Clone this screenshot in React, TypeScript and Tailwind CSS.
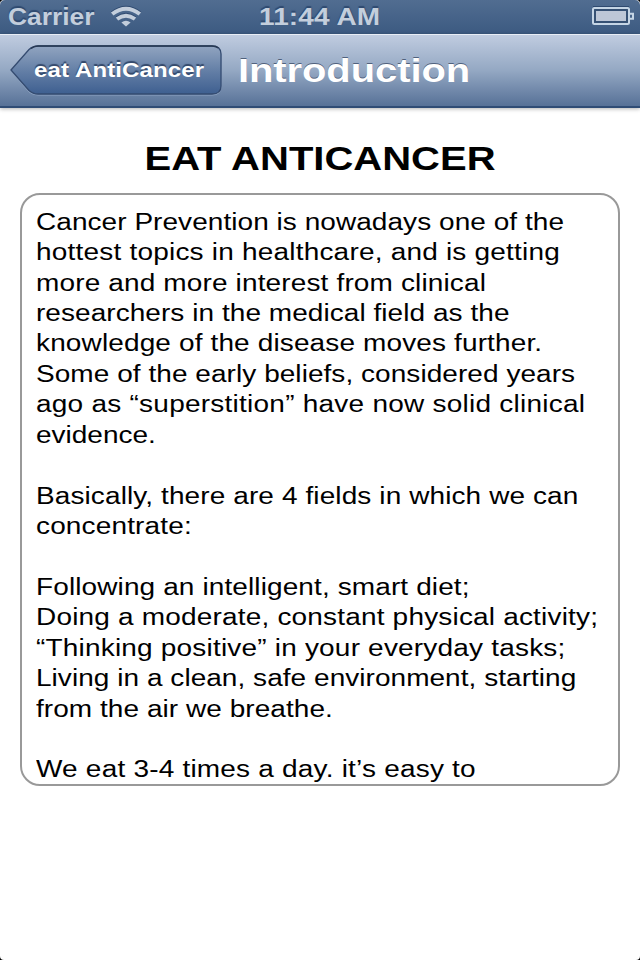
type Line = [text: string, tracking: number]

const paragraphs: Line[][] = [
  [
    ['Cancer Prevention is nowadays one of the', 0.05],
    ['hottest topics in healthcare, and is getting', 0.2],
    ['more and more interest from clinical', 0.14],
    ['researchers in the medical field as the', 0.05],
    ['knowledge of the disease moves further.', 0.13],
    ['Some of the early beliefs, considered years', 0.05],
    ['ago as “superstition” have now solid clinical', 0.24],
    ['evidence.', 0],
  ],
  [
    ['Basically, there are 4 fields in which we can', 0.1],
    ['concentrate:', 0.15],
  ],
  [
    ['Following an intelligent, smart diet;', 0.11],
    ['Doing a moderate, constant physical activity;', 0.18],
    ['“Thinking positive” in your everyday tasks;', 0.19],
    ['Living in a clean, safe environment, starting', 0.04],
    ['from the air we breathe.', 0.05],
  ],
  [['We eat 3-4 times a day. it’s easy to', 0.2]],
]

function WifiIcon() {
  return (
    <svg className="mt-[5px] ml-[16px] h-[22px] w-[32px]" viewBox="0 0 32 22" fill="none">
      <g stroke="#2f4a70" strokeWidth="4" transform="translate(0 -1)">
        <path d="M2.2 9Q16 -1.6 29.8 9" />
        <path d="M7 14Q16 7.4 25 14" />
      </g>
      <g stroke="#c3cedc" strokeWidth="4">
        <path d="M2.2 9Q16 -1.6 29.8 9" />
        <path d="M7 14Q16 7.4 25 14" />
      </g>
      <path d="M11.4 17.4Q16 14 20.6 17.4L16 21.4Z" fill="#c3cedc" />
    </svg>
  )
}

function BatteryIcon() {
  return (
    <svg className="mt-[6px] h-[20px] w-[44px]" viewBox="0 0 44 20" fill="none">
      <rect x="1" y="2" width="36" height="16" rx="1.5" fill="#365174" stroke="#c5d5e5" strokeWidth="2" />
      <rect x="4" y="5" width="30" height="10" fill="#bdc7d7" />
      <path d="M38 7.8h3v5h-3" stroke="#c5d5e5" strokeWidth="2" />
      <path d="M1 .5h36" stroke="#2f4a70" />
    </svg>
  )
}

function StatusBar() {
  return (
    <div className="grid h-[34px] grid-cols-[259px_1fr_48px] rounded-t-[5px] bg-linear-to-b from-[#516d91] to-[#3c5a81] text-[28px] leading-[32px] font-bold text-[#c3cedc] [text-shadow:0_-2px_1px_#2f4a70]">
      <div className="flex items-start pl-[8px]">
        <span className="mt-[3px] block w-[86px] origin-top-left scale-y-[0.88] text-[26.4px]">
          Carrier
        </span>
        <WifiIcon />
      </div>
      <span className="mt-[4px] block origin-top-left scale-y-[0.845] tracking-[0.1px] whitespace-nowrap">
        11:44 AM
      </span>
      <BatteryIcon />
    </div>
  )
}

function BackButton() {
  return (
    <button className="relative mt-[10px] ml-[10px] h-[51px] w-[213px] shrink-0 text-left">
      <svg className="absolute inset-0" width="213" height="51" viewBox="0 0 213 51" fill="none">
        <defs>
          <linearGradient id="back" x1="0" y1="0" x2="0" y2="1">
            <stop offset="0" stopColor="#91a4c0" />
            <stop offset="0.5" stopColor="#6580a7" />
            <stop offset="1" stopColor="#3e5f90" />
          </linearGradient>
        </defs>
        <path
          d="M1 26L19 5Q23 2 28 2H202Q211 2 211 10V42Q211 50 202 50H28Q23 50 19 47Z"
          stroke="#8ca2c1"
        />
        <path
          d="M1 25L19 4.5Q23 1 28 1H202Q211 1 211 9V41Q211 49 202 49H28Q23 49 19 45.5Z"
          fill="url(#back)"
          stroke="#344b70"
          strokeWidth="1.3"
        />
        <path d="M21 3.5Q24 1 28 1H202Q206 1 208.5 3" stroke="#273852" strokeWidth="1.5" />
      </svg>
      <span className="relative mt-[2px] ml-[24px] block origin-top-left scale-y-[0.845] text-[24px] leading-[28px] font-bold tracking-[0.12px] whitespace-nowrap text-white [text-shadow:0_-2px_1px_#33486a]">
        eat AntiCancer
      </span>
    </button>
  )
}

export default function App() {
  return (
    <div className="h-[960px] w-[640px] overflow-hidden bg-black font-['Liberation_Sans',Arial,sans-serif]">
      <div className="flex h-full flex-col rounded-[4px] bg-white">
        <StatusBar />
        <header className="flex h-[74px] shrink-0 items-start border-t border-b-2 border-t-[#e8edf5] border-b-[#2f4c75] bg-linear-to-b from-[#c0cce0] via-[#94a8c3] to-[#577197] shadow-[0_1px_4px_rgba(0,0,0,0.3)]">
          <BackButton />
          <h1 className="mt-[16px] ml-[15px] origin-top-left scale-y-[0.845] text-[40px] leading-[46px] font-bold tracking-[-0.1px] text-white [text-shadow:0_-2px_0_#50617c]">
            Introduction
          </h1>
        </header>
        <h2 className="mt-[31px] h-[54px] origin-top scale-y-[0.845] text-center text-[40px] leading-[46px] font-bold whitespace-nowrap text-black">
          EAT ANTICANCER
        </h2>
        <main className="mx-[20px] h-[593px] shrink-0 overflow-hidden rounded-[20px] border-2 border-[#999] pt-[12.4px] pl-[14px]">
          <div className="origin-top-left scale-y-[0.845] space-y-[36px] text-[28px] leading-[36px] whitespace-nowrap text-black">
            {paragraphs.map((lines, i) => (
              <p key={i}>
                {lines.map(([text, tracking]) => (
                  <span key={text} className="block" style={{ letterSpacing: tracking }}>
                    {text}
                  </span>
                ))}
              </p>
            ))}
          </div>
        </main>
      </div>
    </div>
  )
}
